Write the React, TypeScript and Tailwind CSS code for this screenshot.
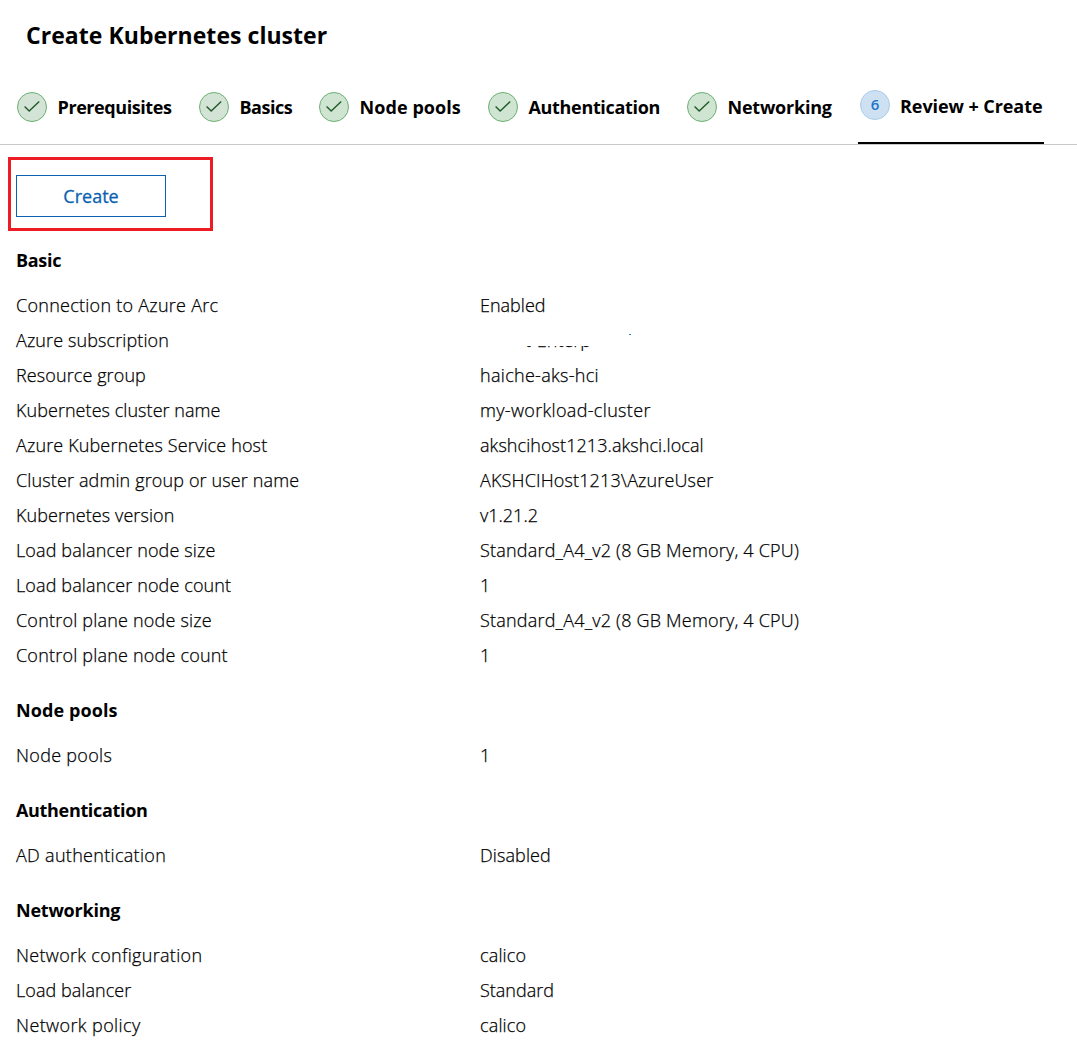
import React from "react";

const STEPS = [
  { label: "Prerequisites", step: "w-[182px]", circle: "bg-[#d3e3d5]", spacing: "tracking-[-0.42px]" },
  { label: "Basics", step: "w-[120px]", circle: "bg-[#d3e3d5]", spacing: "tracking-[-0.5px]" },
  { label: "Node pools", step: "w-[169px]", circle: "bg-[#cfe5d1]", spacing: "tracking-[0.08px]" },
  { label: "Authentication", step: "w-[199px]", circle: "bg-[#cfe5d1]", spacing: "tracking-[-0.33px]" },
  { label: "Networking", step: "w-[171px]", circle: "bg-[#cfe5d1]", spacing: "tracking-[-0.22px]" },
];

type Cell = { text: string; spacing: string };
type Row = [Cell, Cell | null];

const cell = (text: string, spacing = "tracking-normal"): Cell => ({ text, spacing });

const SECTIONS: { title: Cell; rows: Row[] }[] = [
  {
    title: cell("Basic", "tracking-[-0.3px]"),
    rows: [
      [cell("Connection to Azure Arc", "tracking-[0.26px]"), cell("Enabled")],
      [cell("Azure subscription", "tracking-[0.11px]"), null],
      [cell("Resource group", "tracking-[0.1px]"), cell("haiche-aks-hci", "tracking-[0.3px]")],
      [cell("Kubernetes cluster name", "tracking-[0.05px]"), cell("my-workload-cluster", "tracking-[0.33px]")],
      [cell("Azure Kubernetes Service host", "tracking-[0.14px]"), cell("akshcihost1213.akshci.local", "tracking-[0.07px]")],
      [cell("Cluster admin group or user name", "tracking-[0.13px]"), cell("AKSHCIHost1213\\AzureUser", "tracking-[0.15px]")],
      [cell("Kubernetes version", "tracking-[0.08px]"), cell("v1.21.2")],
      [cell("Load balancer node size", "tracking-[0.13px]"), cell("Standard_A4_v2 (8 GB Memory, 4 CPU)", "tracking-[0.2px]")],
      [cell("Load balancer node count", "tracking-[0.13px]"), cell("1")],
      [cell("Control plane node size", "tracking-[0.2px]"), cell("Standard_A4_v2 (8 GB Memory, 4 CPU)", "tracking-[0.2px]")],
      [cell("Control plane node count", "tracking-[0.2px]"), cell("1")],
    ],
  },
  {
    title: cell("Node pools", "tracking-[0.1px]"),
    rows: [[cell("Node pools", "tracking-[0.3px]"), cell("1")]],
  },
  {
    title: cell("Authentication", "tracking-[-0.33px]"),
    rows: [[cell("AD authentication", "tracking-[0.3px]"), cell("Disabled", "tracking-[0.1px]")]],
  },
  {
    title: cell("Networking", "tracking-[-0.22px]"),
    rows: [
      [cell("Network configuration", "tracking-[0.31px]"), cell("calico", "tracking-[0.15px]")],
      [cell("Load balancer", "tracking-[0.05px]"), cell("Standard")],
      [cell("Network policy", "tracking-[0.4px]"), cell("calico", "tracking-[0.15px]")],
    ],
  },
];

/* Partly erased subscription name: only the foot of the letters is left. */
function ErasedValue() {
  return (
    <div className="relative h-[35px] w-[200px]">
      <div className="absolute top-[23px] left-[45px] h-[5px] w-[70px] overflow-hidden">
        <span className="-mt-[23px] block leading-[35px] whitespace-nowrap">t-Enterp</span>
      </div>
      <div className="absolute top-[11px] left-[149px] h-px w-[2px] bg-[#2f86b8]" />
    </div>
  );
}

export default function App() {
  return (
    <div className="h-[1055px] w-[1077px] overflow-hidden bg-white font-['Open_Sans','Noto_Sans',sans-serif] text-black">
      <h1 className="h-[92px] pt-[18px] pl-[26px] text-[23px] leading-[34px] font-bold tracking-[0.04px]">
        Create Kubernetes cluster
      </h1>
      <nav className="flex h-[53px] border-b border-[#c8c8c8] pl-[17px] text-[18px] font-bold">
        {STEPS.map((s) => (
          <div key={s.label} className={`flex shrink-0 ${s.step}`}>
            <span className={`flex size-[30px] shrink-0 items-center justify-center rounded-full border border-[#6bb071] ${s.circle}`}>
              <svg width="16" height="12" viewBox="0 0 16 12" fill="none" stroke="#1f5a2a" strokeWidth="1.4">
                <path d="M0.6 5.4 5.2 10 15.2 0.6" />
              </svg>
            </span>
            <span className={`ml-[10.5px] leading-[30px] whitespace-nowrap ${s.spacing}`}>{s.label}</span>
          </div>
        ))}
        <div className="flex h-[52px] w-[186px] border-b-2 border-black pl-[2px]">
          <span className="-mt-[2px] flex size-[30px] shrink-0 items-center justify-center rounded-full border border-[#a9cbe8] bg-[#cde1f3] pb-[2px] text-[15px] font-semibold text-[#1f74c4]">
            6
          </span>
          <span className="ml-[10px] leading-[29px] tracking-[-0.07px] whitespace-nowrap">Review + Create</span>
        </div>
      </nav>
      <div className="mt-[12px] ml-[8px] h-[74px] w-[205px] border-[3px] border-[#ed1c24] pt-[15px] pl-[5px]">
        <button className="block h-[42px] w-[150px] border border-[#0a62b0] text-[18px] text-[#0a62b0] [-webkit-text-stroke:0.3px_#0a62b0]">
          Create
        </button>
      </div>
      <main className="pl-4 text-[18px] font-light">
        {SECTIONS.map((s) => (
          <section key={s.title.text} className="pb-[8px]">
            <h2 className={`mb-[12px] h-[45px] pt-[12px] leading-[35px] font-bold ${s.title.spacing}`}>{s.title.text}</h2>
            {s.rows.map(([k, v]) => (
              <div key={k.text} className="flex h-[35px] leading-[35px] whitespace-nowrap [-webkit-text-stroke:0.25px_black]">
                <div className={`w-[464px] ${k.spacing}`}>{k.text}</div>
                {v ? <span className={v.spacing}>{v.text}</span> : <ErasedValue />}
              </div>
            ))}
          </section>
        ))}
      </main>
    </div>
  );
}
